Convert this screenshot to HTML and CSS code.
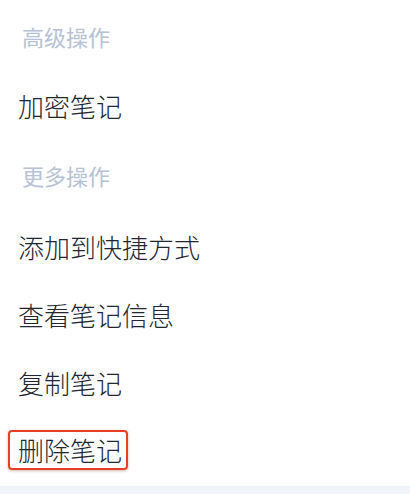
FILE: index.html
```html
<!DOCTYPE html>
<html lang="zh-CN">
<head>
<meta charset="utf-8">
<link rel="stylesheet" href="styles.css">
</head>
<body>
<div class="sheet">
  <div class="group-title first">高级操作</div>
  <div class="item item-first">加密笔记</div>
  <div class="group-title second">更多操作</div>
  <div class="item">添加到快捷方式</div>
  <div class="item">查看笔记信息</div>
  <div class="item">复制笔记</div>
  <div class="item item-marked"><span class="mark">删除笔记</span></div>
</div>
<div class="footer-strip"></div>
</body>
</html>
```

FILE: styles.css
```css
html, body {
  margin: 0;
  padding: 0;
  background: #ffffff;
}
body {
  width: 410px;
  height: 494px;
  overflow: hidden;
  font-family: "Noto Sans CJK SC", "Noto Sans", sans-serif;
  display: flex;
  flex-direction: column;
}
.sheet {
  flex: 1;
  display: flex;
  flex-direction: column;
}
.group-title {
  display: flex;
  align-items: center;
  padding-left: 22px;
  font-size: 22px;
  font-weight: 400;
  color: #b6c2d6;
  height: 74px;
}
.group-title.first {
  height: 72px;
}
.item {
  display: flex;
  align-items: center;
  padding-left: 18px;
  font-size: 26px;
  font-weight: 300;
  color: #222631;
  height: 68px;
}
.item-first {
  height: 66px;
}
.item-marked {
  padding-left: 8px;
}
.mark {
  display: inline-block;
  border: 2px solid #ea3e24;
  border-radius: 4px;
  padding: 1px 4px 1px 8px;
  line-height: 34px;
  box-shadow: 0 1px 3px rgba(120, 60, 40, 0.35);
}
.footer-strip {
  height: 8px;
  background: #f1f4f8;
}
```
